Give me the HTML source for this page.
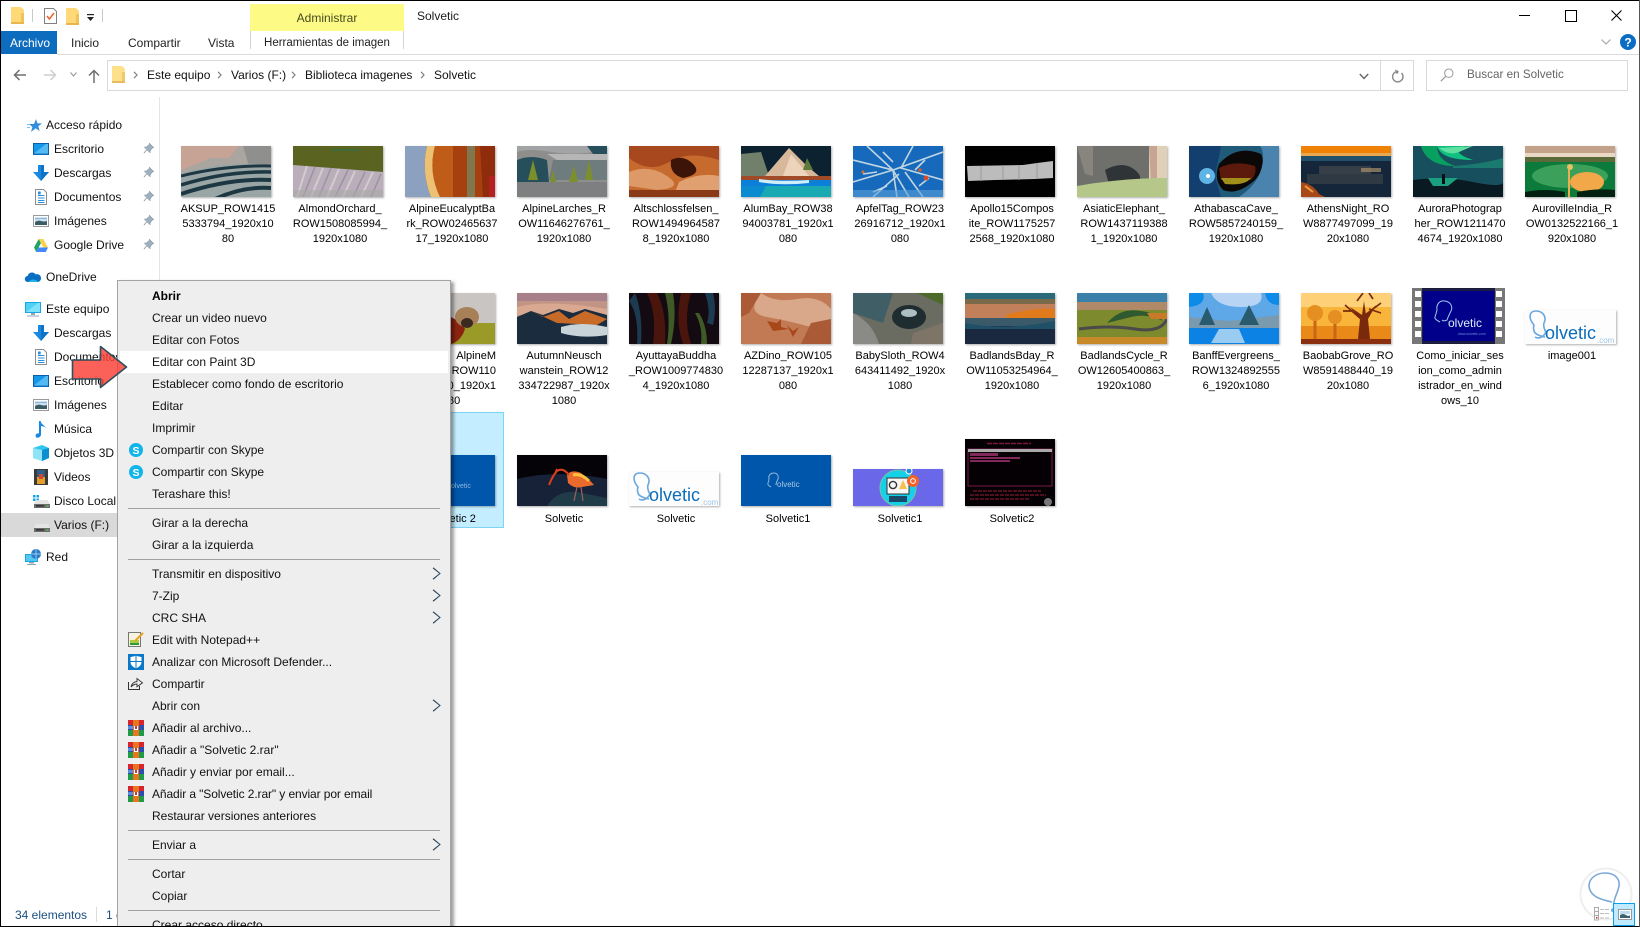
<!DOCTYPE html>
<html lang="es"><head><meta charset="utf-8"><title>Solvetic</title>
<style>
html,body{margin:0;padding:0;background:#fff}
#w{position:relative;width:1640px;height:927px;overflow:hidden;background:#fff;font-family:"Liberation Sans",sans-serif;color:#111}
.a{position:absolute}
.n{position:absolute;white-space:nowrap;font-size:12px;line-height:16px}
.l{position:absolute;width:112px;text-align:center;font-size:11px;line-height:15px;white-space:nowrap;color:#000}
.th{position:absolute;box-shadow:1px 1px 2px rgba(0,0,0,.32);display:block}
.ic{position:absolute;display:block;overflow:visible}
.m{position:absolute;left:152px;white-space:nowrap;font-size:12px;line-height:16px;color:#111}
.s{position:absolute;left:128px;width:312px;height:1px;background:#a0a0a0}
.c{position:absolute;left:432px;width:9px;height:13px}
</style></head><body><div id="w">

<!-- symbols -->
<svg width="0" height="0" style="position:absolute"><defs>
<symbol id="pin" viewBox="0 0 12 12"><path d="M7 0.5 L11.5 5 L9.8 5.6 L7.8 8.4 L7.6 10.4 L1.8 4.6 L3.8 4.3 L6.4 2.3Z M4 7.6 L1 11" fill="#9fb0bd" stroke="#93a5b3" stroke-width="1"/></symbol>
<symbol id="dl" viewBox="0 0 16 16"><path d="M5 0h6v7h5l-8 9-8-9h5z" fill="#1a87e0"/><path d="M8 0h3v7h5l-8 9z" fill="#0f74c8"/></symbol>
<symbol id="doc" viewBox="0 0 12 16"><path d="M.5.5h8l3 3v12H.5z" fill="#fff" stroke="#8d8d8d"/><path d="M3 4h3M3 6.5h6.5M3 9h6.5M3 11.5h6.5M3 13.5h6.5" stroke="#2e8fdc" stroke-width="1.1"/><path d="M3 2.5h2.5v3H3z" fill="#2e8fdc"/></symbol>
<symbol id="pic" viewBox="0 0 16 12"><rect x=".5" y=".5" width="15" height="11" fill="#fff" stroke="#9a9a9a"/><rect x="2" y="2" width="12" height="8" fill="#cfe3f2"/><path d="M2 7q3-2 6-1t6 0v4H2z" fill="#3c5b66"/><path d="M2 3h12v1.5q-6-1-12 0z" fill="#8fbcdc"/></symbol>
<symbol id="desk" viewBox="0 0 16 12"><rect width="16" height="12" fill="#0a5fa8"/><rect x="1" y="1" width="14" height="9.5" fill="#1496ea"/><path d="M1 10.5L13 1h2v9.5z" fill="#53baf2"/><rect x="1" y="10.5" width="14" height="1" fill="#0d7ccc"/></symbol>
<symbol id="hd" viewBox="0 0 16 8"><path d="M2 0h12l2 4v4H0V4z" fill="#e4e4e4"/><rect y="4" width="16" height="4" fill="#6d6d6d"/><rect x="2" y="5.3" width="8" height="1.2" fill="#222"/><rect x="12.5" y="5.3" width="2" height="1.4" fill="#3dd35a"/></symbol>
<symbol id="rar" viewBox="0 0 16 16"><rect width="16" height="5" fill="#2a55b8"/><rect y="5" width="16" height="5" fill="#2a4fb0"/><rect y="10" width="16" height="6" fill="#1f9a46"/><rect x="5" width="6" height="16" fill="#e8761e"/><rect width="5" height="5" fill="#d8242c"/><rect x="11" width="5" height="5" fill="#d8242c"/><rect x="6" y="6" width="4" height="4" fill="#fff"/><rect x="7.2" y="6" width="1.6" height="3" fill="#a11"/><rect x="0" y="6" width="5" height="3" fill="#5a8fe0"/></symbol>
<symbol id="arr" viewBox="0 0 9 13"><path d="M1 .8L8 6.5 1 12.2" fill="none" stroke="#333" stroke-width="1" /><path d="M2 .8L8.3 6.5 2 12.2" fill="none" stroke="#2c8fd8" stroke-width=".4"/></symbol>
</defs></svg>

<!-- title bar / quick access -->
<svg class="ic" style="left:11px;top:7px" width="14" height="17" viewBox="0 0 14 17"><path d="M0 0h10l3 3v14H0z" fill="#ffd978"/><path d="M10 6h3v11h-3z" fill="#f0c25a"/><path d="M0 15h13v2H0z" fill="#e8b64c"/></svg>
<div class="a" style="left:32px;top:9px;width:1px;height:13px;background:#c9c9c9"></div>
<svg class="ic" style="left:44px;top:8px" width="13" height="16" viewBox="0 0 13 16"><path d="M.5.5h9l3 3v12H.5z" fill="#fff" stroke="#808080"/><path d="M3 8l2.4 3L10 5" fill="none" stroke="#e8632a" stroke-width="1.5"/></svg>
<svg class="ic" style="left:66px;top:8px" width="14" height="17" viewBox="0 0 14 17"><path d="M0 0h10l3 3v14H0z" fill="#ffd978"/><path d="M10 6h3v11h-3z" fill="#f0c25a"/><path d="M0 15h13v2H0z" fill="#e8b64c"/></svg>
<svg class="ic" style="left:87px;top:14px" width="7" height="7" viewBox="0 0 7 7"><path d="M0 0h7v1.2H0z" fill="#222"/><path d="M0 3h7L3.500 7z" fill="#222"/></svg>
<div class="a" style="left:102px;top:9px;width:1px;height:13px;background:#c9c9c9"></div>
<div class="a" style="left:250px;top:4px;width:154px;height:27px;background:#fdfb85"></div>
<div class="n" style="left:250px;width:154px;text-align:center;top:10px;color:#444b20">Administrar</div>
<div class="n" style="left:417px;top:8px;color:#1a1a1a">Solvetic</div>
<div class="a" style="left:1519px;top:15px;width:11px;height:1px;background:#000"></div>
<div class="a" style="left:1565px;top:10px;width:10px;height:10px;border:1px solid #000"></div>
<svg class="ic" style="left:1611px;top:10px" width="11" height="11" viewBox="0 0 11 11"><path d="M.5.5l10 10M10.500.5l-10 10" stroke="#000" stroke-width="1.1"/></svg>
<svg class="ic" style="left:1601px;top:39px" width="10" height="6" viewBox="0 0 10 6"><path d="M.5.5L5 5 9.500.5" fill="none" stroke="#aaa" stroke-width="1.2"/></svg>
<svg class="ic" style="left:1620px;top:34px" width="16" height="16" viewBox="0 0 16 16"><circle cx="8" cy="8" r="8" fill="#0a6cc4"/><text x="8" y="12.5" text-anchor="middle" font-family="Liberation Sans" font-size="12" font-weight="bold" fill="#fff">?</text></svg>

<!-- ribbon tabs -->
<div class="a" style="left:1px;top:31px;width:56px;height:23px;background:#0e6cbe"></div>
<div class="n" style="left:10px;top:35px;color:#fff">Archivo</div>
<div class="n" style="left:71px;top:35px;color:#222">Inicio</div>
<div class="n" style="left:128px;top:35px;color:#222">Compartir</div>
<div class="n" style="left:208px;top:35px;color:#222">Vista</div>
<div class="a" style="left:250px;top:31px;width:1px;height:18px;background:#d4d4d4"></div>
<div class="a" style="left:403px;top:31px;width:1px;height:18px;background:#d4d4d4"></div>
<div class="n" style="left:251px;width:152px;text-align:center;top:35px;color:#222;font-size:11.5px">Herramientas de imagen</div>
<div class="a" style="left:57px;top:54px;width:1583px;height:1px;background:#dadbdc"></div>

<!-- nav -->
<svg class="ic" style="left:13px;top:69px" width="14" height="12" viewBox="0 0 14 12"><path d="M13 6H2M6.500 1L1.500 6l5 5" fill="none" stroke="#6e6e6e" stroke-width="1.5"/></svg>
<svg class="ic" style="left:43px;top:69px" width="14" height="12" viewBox="0 0 14 12"><path d="M1 6h11M7.500 1l5 5-5 5" fill="none" stroke="#cfcfcf" stroke-width="1.5"/></svg>
<svg class="ic" style="left:70px;top:72px" width="7" height="5" viewBox="0 0 7 5"><path d="M.5.5L3.500 4l3-3.500" fill="none" stroke="#9c9c9c" stroke-width="1.2"/></svg>
<svg class="ic" style="left:88px;top:69px" width="12" height="14" viewBox="0 0 12 14"><path d="M6 14V2M1 6.500l5-5 5 5" fill="none" stroke="#6e6e6e" stroke-width="1.5"/></svg>
<div class="a" style="left:107px;top:60px;width:1305px;height:29px;border:1px solid #d9d9d9"></div>
<div class="a" style="left:1380px;top:61px;width:1px;height:29px;background:#d9d9d9"></div>
<svg class="ic" style="left:112px;top:66px" width="14" height="17" viewBox="0 0 14 17"><path d="M0 0h10l3 3v14H0z" fill="#ffe08a"/><path d="M10 6h3v11h-3z" fill="#f0c870"/><path d="M0 15h13v2H0z" fill="#e8bc5c"/></svg>
<svg class="ic" style="left:133px;top:71px" width="5" height="8" viewBox="0 0 5 8"><path d="M1 .8L4 4 1 7.200" fill="none" stroke="#808080" stroke-width="1.2"/></svg>
<div class="n" style="left:147px;top:67px">Este equipo</div>
<svg class="ic" style="left:217px;top:71px" width="5" height="8" viewBox="0 0 5 8"><path d="M1 .8L4 4 1 7.200" fill="none" stroke="#808080" stroke-width="1.2"/></svg>
<div class="n" style="left:231px;top:67px">Varios (F:)</div>
<svg class="ic" style="left:291px;top:71px" width="5" height="8" viewBox="0 0 5 8"><path d="M1 .8L4 4 1 7.200" fill="none" stroke="#808080" stroke-width="1.2"/></svg>
<div class="n" style="left:305px;top:67px">Biblioteca imagenes</div>
<svg class="ic" style="left:420px;top:71px" width="5" height="8" viewBox="0 0 5 8"><path d="M1 .8L4 4 1 7.200" fill="none" stroke="#808080" stroke-width="1.2"/></svg>
<div class="n" style="left:434px;top:67px">Solvetic</div>
<svg class="ic" style="left:1359px;top:73px" width="10" height="7" viewBox="0 0 10 7"><path d="M.8 1L5 5.500 9.200 1" fill="none" stroke="#666" stroke-width="1.4"/></svg>
<svg class="ic" style="left:1391px;top:69px" width="13" height="14" viewBox="0 0 13 14"><path d="M6.500 1.500v3M10.500 4A5.200 5.200 0 1 1 4.500 3" fill="none" stroke="#8a8a8a" stroke-width="1.4"/><path d="M4 .5l4 2-3 2.500z" fill="#8a8a8a"/></svg>
<div class="a" style="left:1426px;top:60px;width:200px;height:29px;border:1px solid #d9d9d9"></div>
<svg class="ic" style="left:1440px;top:68px" width="14" height="14" viewBox="0 0 14 14"><circle cx="8.800" cy="5.200" r="4.200" fill="none" stroke="#9a9a9a"/><path d="M5.800 8.300L.8 13.200" stroke="#9a9a9a" stroke-width="1.2"/></svg>
<div class="n" style="left:1467px;top:67px;color:#666;font-size:11.7px">Buscar en Solvetic</div>

<!-- sidebar -->
<div class="a" style="left:159px;top:97px;width:1px;height:830px;background:#e5e5e5"></div>
<div class="a" style="left:1px;top:513px;width:118px;height:24px;background:#d9d9d9"></div>
<svg class="ic" style="left:27px;top:119px" width="15" height="13" viewBox="0 0 15 13"><path d="M9 0l1.400 4.400H15l-3.700 2.800L12.600 12 8.600 9.200 4 13l1.400-5L2 5h5z" fill="#2f8fdc"/><path d="M0 5.500h3M0 8.500h3" stroke="#7dbdec"/></svg>
<div class="n" style="left:46px;top:117px">Acceso rápido</div>
<svg class="ic" style="left:33px;top:143px" width="16" height="12"><use href="#desk"/></svg>
<div class="n" style="left:54px;top:141px">Escritorio</div>
<svg class="ic" style="left:33px;top:165px" width="16" height="16"><use href="#dl"/></svg>
<div class="n" style="left:54px;top:165px">Descargas</div>
<svg class="ic" style="left:35px;top:189px" width="12" height="16"><use href="#doc"/></svg>
<div class="n" style="left:54px;top:189px">Documentos</div>
<svg class="ic" style="left:33px;top:215px" width="16" height="12"><use href="#pic"/></svg>
<div class="n" style="left:54px;top:213px">Imágenes</div>
<svg class="ic" style="left:34px;top:239px" width="14" height="13" viewBox="0 0 14 13"><path d="M4.700 0L0 8.500 2.200 13 7 4z" fill="#1fa463"/><path d="M4.700 0h4.600L14 8.500H9.400z" fill="#ffd04b"/><path d="M2.200 13h9.600L14 8.500H4.600z" fill="#4387fd"/></svg>
<div class="n" style="left:54px;top:237px">Google Drive</div>
<svg class="ic" style="left:143px;top:143px" width="11" height="11"><use href="#pin"/></svg>
<svg class="ic" style="left:143px;top:167px" width="11" height="11"><use href="#pin"/></svg>
<svg class="ic" style="left:143px;top:191px" width="11" height="11"><use href="#pin"/></svg>
<svg class="ic" style="left:143px;top:215px" width="11" height="11"><use href="#pin"/></svg>
<svg class="ic" style="left:143px;top:239px" width="11" height="11"><use href="#pin"/></svg>
<svg class="ic" style="left:25px;top:271px" width="16" height="11" viewBox="0 0 16 11"><path d="M3 11A3 3 0 0 1 2.600 5 4.500 4.500 0 0 1 10.600 3.400 3.600 3.600 0 0 1 13.400 11z" fill="#0a6fc2"/><path d="M3 11q5-5 10.400 0z" fill="#22b0e8"/></svg>
<div class="n" style="left:46px;top:269px">OneDrive</div>
<svg class="ic" style="left:25px;top:302px" width="16" height="15" viewBox="0 0 16 15"><rect width="16" height="11" fill="#1ba5e4"/><path d="M1 1h14v9H1z" fill="#4fd0f5"/><path d="M1 10L13 1h2v9z" fill="#7de2fa"/><path d="M6 11h4v2H6zM2 13.500h12v1H2z" fill="#8fa6b4"/></svg>
<div class="n" style="left:46px;top:301px">Este equipo</div>
<svg class="ic" style="left:33px;top:325px" width="16" height="16"><use href="#dl"/></svg>
<div class="n" style="left:54px;top:325px">Descargas</div>
<svg class="ic" style="left:35px;top:349px" width="12" height="16"><use href="#doc"/></svg>
<div class="n" style="left:54px;top:349px">Documentos</div>
<svg class="ic" style="left:33px;top:375px" width="16" height="12"><use href="#desk"/></svg>
<div class="n" style="left:54px;top:373px">Escritorio</div>
<svg class="ic" style="left:33px;top:399px" width="16" height="12"><use href="#pic"/></svg>
<div class="n" style="left:54px;top:397px">Imágenes</div>
<svg class="ic" style="left:35px;top:421px" width="12" height="17" viewBox="0 0 12 17"><path d="M4 0h1.600c.4 3 3.500 4 5.400 7-1.300-1-3-1.800-5-2v8.500C6 16 3.500 17 1.800 16.600 0 16 .2 13.500 2 12.600c.7-.4 1.400-.4 2-.2z" fill="#1a87e0"/></svg>
<div class="n" style="left:54px;top:421px">Música</div>
<svg class="ic" style="left:33px;top:445px" width="16" height="16" viewBox="0 0 16 16"><path d="M0 3l9-3 7 3v10l-7 3-9-3z" fill="#2fc5ee"/><path d="M0 3l9 2v11l-9-3z" fill="#8fe4f8"/><path d="M9 5l7-2v10l-7 3z" fill="#0c8fd0"/></svg>
<div class="n" style="left:54px;top:445px">Objetos 3D</div>
<svg class="ic" style="left:34px;top:469px" width="14" height="16" viewBox="0 0 14 16"><rect width="14" height="16" fill="#3a3a3a"/><rect x="3" y="1" width="8" height="14" fill="#2c5f8a"/><rect x="3" y="8" width="8" height="7" fill="#e2a02a"/><rect x="5" y="5" width="4" height="5" fill="#d5472a"/></svg>
<div class="n" style="left:54px;top:469px">Videos</div>
<svg class="ic" style="left:33px;top:495px" width="6" height="6" viewBox="0 0 6 6"><path d="M0 0h2.500v2.500H0zM3.500 0H6v2.500H3.500zM0 3.500h2.500V6H0zM3.500 3.500H6V6H3.500z" fill="#11a5ea"/></svg>
<svg class="ic" style="left:34px;top:500px" width="16" height="8"><use href="#hd"/></svg>
<div class="n" style="left:54px;top:493px">Disco Local</div>
<svg class="ic" style="left:34px;top:524px" width="16" height="8"><use href="#hd"/></svg>
<div class="n" style="left:54px;top:517px">Varios (F:)</div>
<svg class="ic" style="left:25px;top:549px" width="16" height="16" viewBox="0 0 16 16"><rect y="5" width="13" height="8" fill="#1ba5e4"/><rect x="1" y="6" width="11" height="6" fill="#53c8f2"/><circle cx="11" cy="5" r="5" fill="#2a7cc8"/><path d="M11 0v10M6 5h10" stroke="#bfe3f7" stroke-width=".7"/><path d="M4 13h5v1.500H4zM2 15h9v1H2z" fill="#8fa6b4"/></svg>
<div class="n" style="left:46px;top:549px">Red</div>

<!-- ROW 1 thumbs -->
<svg class="th" style="left:181px;top:146px" width="90" height="51" viewBox="0 0 90 51"><rect width="90" height="51" fill="#aaa59f"/><path d="M0 0h58L48 12 30 12 0 24z" fill="#c7a396"/><path d="M62 0h28v18L68 20z" fill="#8f8f8e"/><path d="M0 28q45-14 90-9v32H0z" fill="#9aa6a5"/><g fill="none" stroke="#1d3843"><path d="M0 30q45-11 90-10" stroke-width="3"/><path d="M0 39q45-14 90-13" stroke-width="3.500"/><path d="M0 48q48-16 90-14" stroke-width="4"/><path d="M30 55q30-15 60-13" stroke-width="4"/></g></svg>
<svg class="th" style="left:293px;top:146px" width="90" height="51" viewBox="0 0 90 51"><rect width="90" height="51" fill="#bbaebb"/><path d="M0 0h90v26L0 19z" fill="#5a631f"/><path d="M38 4h30" stroke="#3f6b3a" stroke-width="2"/><g stroke="#d8d4d6" stroke-width="2" opacity=".8"><path d="M14 20L4 51M30 22L18 51M46 23L34 51M62 25L50 51M80 26L68 51"/></g><g stroke="#978a9c" stroke-width="1.500" opacity=".8"><path d="M22 21L10 51M38 22L26 51M55 24L42 51M72 26L60 51M88 28L78 51"/></g><path d="M0 44h90v7H0z" fill="#a8a8a6" opacity=".6"/></svg>
<svg class="th" style="left:405px;top:146px" width="90" height="51" viewBox="0 0 90 51"><rect width="90" height="51" fill="#a7400f"/><path d="M0 0h22q-6 26 4 51H0z" fill="#8ba1bf"/><path d="M22 0h8q-7 26 5 51H26Q16 26 22 0z" fill="#ecc174"/><path d="M30 0h18v51H35Q23 26 30 0z" fill="#bf5c18"/><path d="M62 0h8v51h-8z" fill="#6f8f6a" opacity=".7"/><path d="M75 0h15v51H78z" fill="#8e2c0c"/><path d="M84 30h6v21h-6z" fill="#b52020"/></svg>
<svg class="th" style="left:517px;top:146px" width="90" height="51" viewBox="0 0 90 51"><rect width="90" height="51" fill="#8e8f8d"/><path d="M0 0h90v4q-30 6-55 2T0 6z" fill="#a2a3a4"/><path d="M0 14q14-6 30 0l2 22H0zM70 0h20v12L76 8z" fill="#264f5b"/><path d="M30 8h60v6H40z" fill="#b6b6b6"/><path d="M36 14h54v20H32z" fill="#6f7c7e"/><path d="M16 14l5 20H11zM57 20l4 16H52zM72 14l4 20H68z" fill="#7c8f2b"/><path d="M36 24l3 12h-6z" fill="#7c8f2b"/><path d="M0 36h90v15H0z" fill="#7d7f80"/></svg>
<svg class="th" style="left:629px;top:146px" width="90" height="51" viewBox="0 0 90 51"><rect width="90" height="51" fill="#c66a2e"/><path d="M0 0h90v14Q60 4 40 16T0 12z" fill="#a8481e"/><path d="M42 14q12-6 22 4t-10 14q-14-4-12-18z" fill="#3d1508"/><path d="M0 26q20-8 38 4t-10 14L0 40z" fill="#dd9a68"/><path d="M50 36q20-10 40-6v21H44z" fill="#e0a070"/><path d="M0 44h90v7H0z" fill="#8a3a16"/></svg>
<svg class="th" style="left:741px;top:146px" width="90" height="51" viewBox="0 0 90 51"><rect width="90" height="51" fill="#0d2230"/><path d="M0 8L20 6 28 30H0z" fill="#70806a"/><path d="M24 30L48 2 66 20 78 30z" fill="#d8b89a"/><path d="M50 8L68 30H42z" fill="#ecd3ba"/><path d="M66 12L72 24H62z" fill="#5e7a3a"/><path d="M0 30h90v4H0z" fill="#a04a28"/><path d="M0 34h90v6H0z" fill="#0c7fd8"/><path d="M18 33q22 3 50 1v3q-28 3-50-1z" fill="#cfeefc"/><path d="M0 40h90v11H0z" fill="#18a9b2"/><path d="M0 40h25l-6 11H0z" fill="#0a8bd0"/></svg>
<svg class="th" style="left:853px;top:146px" width="90" height="51" viewBox="0 0 90 51"><rect width="90" height="51" fill="#1769bb"/><g fill="none" stroke="#bfd6e2" stroke-width="1.600"><path d="M0 14L40 24 90 6M0 36L40 24 56 51M14 0L40 24 44 51M60 0L48 22 90 34M20 51L46 28M70 51L52 26"/><path d="M30 6l10 10M72 14l-10 10M10 28l14-2M66 40l10-8M34 40l-14 6"/></g><circle cx="67" cy="24" r="1.800" fill="#d8582c"/><circle cx="73" cy="32" r="2.400" fill="#d84a2a"/><circle cx="10" cy="26" r="1.500" fill="#d8702a"/><path d="M0 44h90v7H0z" fill="#5aa0d8" opacity=".6"/></svg>
<svg class="th" style="left:965px;top:146px" width="90" height="51" viewBox="0 0 90 51"><rect width="90" height="51" fill="#020101"/><path d="M2 20L58 19 72 17 88 15V32L70 33 30 34 3 35z" fill="#bcbcbc"/><path d="M16 20v15M38 19v15M54 19v15M72 17v16" stroke="#9a9a9a"/></svg>
<svg class="th" style="left:1077px;top:146px" width="90" height="51" viewBox="0 0 90 51"><rect width="90" height="51" fill="#e0d0b8"/><path d="M0 0h72v44H0z" fill="#6f706c"/><path d="M72 0h8v38h-6z" fill="#c7a592"/><path d="M28 24q18-10 30 0t-4 14H32z" fill="#2f3436"/><path d="M0 0h16v30L8 28z" fill="#88847e"/><path d="M0 40q45-8 90-8v19H0z" fill="#b5c889"/></svg>
<svg class="th" style="left:1189px;top:146px" width="90" height="51" viewBox="0 0 90 51"><rect width="90" height="51" fill="#1f5a78"/><path d="M0 0h32L26 30 32 51H0z" fill="#133f6e"/><circle cx="18" cy="30" r="8" fill="#5fb4e6"/><circle cx="19" cy="30" r="2" fill="#fff"/><path d="M30 18Q48-2 72 8q6 12-6 26Q48 50 34 44q-10-10-4-26z" fill="#0c0807"/><path d="M30 22q16-8 36-2 2 8-4 14H32z" fill="#5c1a0c"/><path d="M32 32h30q-6 8-26 6z" fill="#a0901a"/><path d="M40 0q30 0 50 0v51H50q24-16 24-40T40 0z" fill="#4a84ae"/></svg>
<svg class="th" style="left:1301px;top:146px" width="90" height="51" viewBox="0 0 90 51"><rect width="90" height="51" fill="#16263a"/><rect width="90" height="7" fill="#ef8106"/><rect y="7" width="90" height="3" fill="#e8a850"/><rect y="10" width="90" height="5" fill="#22506a"/><g fill="#5e5f58"><rect x="18" y="20" width="52" height="8" opacity=".45"/><rect x="6" y="28" width="76" height="10" opacity=".35"/><rect x="60" y="22" width="20" height="4" fill="#a89068" opacity=".7"/></g><path d="M0 36q12 2 18 12l6 3H0z" fill="#a84818"/><path d="M4 40l8 6" stroke="#e8a040" stroke-width="2"/></svg>
<svg class="th" style="left:1413px;top:146px" width="90" height="51" viewBox="0 0 90 51"><rect width="90" height="51" fill="#184f5e"/><path d="M8 0q6 20 34 20Q24 14 24 0z" fill="#08a060"/><path d="M24 0h28Q36 6 60 14 28 14 24 0z" fill="#10c080"/><path d="M26 2q10 8 20 4L60 0z" fill="#60e0a0"/><path d="M40 20q30-2 50-8v10H40z" fill="#1a7a70"/><path d="M0 34q30-4 60 2t30 0v15H0z" fill="#0a1a22"/><path d="M15 32h30l-10 8H20z" fill="#1aa080"/><rect x="29" y="28" width="3" height="10" fill="#0a0f14"/></svg>
<svg class="th" style="left:1525px;top:146px" width="90" height="51" viewBox="0 0 90 51"><rect width="90" height="51" fill="#0b7a3a"/><rect width="90" height="10" fill="#c4a28a"/><rect y="7" width="90" height="4" fill="#e8d8c4"/><rect y="11" width="90" height="5" fill="#5c6a3a"/><ellipse cx="45" cy="30" rx="38" ry="12" fill="#3aa05a"/><ellipse cx="62" cy="36" rx="17" ry="10" fill="#f0a848"/><path d="M44 20v31" stroke="#e8b050" stroke-width="2"/><circle cx="45" cy="21" r="3" fill="#e8c060"/><path d="M0 46q20-4 40 0v5H0zM52 46q20-4 38-2v7H52z" fill="#032010"/></svg>

<!-- ROW 1 labels -->
<div class="l" style="left:172px;top:202px">AKSUP_ROW1415<br>5333794_1920x10<br>80</div>
<div class="l" style="left:284px;top:202px">AlmondOrchard_<br>ROW1508085994_<br>1920x1080</div>
<div class="l" style="left:396px;top:202px">AlpineEucalyptBa<br>rk_ROW02465637<br>17_1920x1080</div>
<div class="l" style="left:508px;top:202px">AlpineLarches_R<br>OW11646276761_<br>1920x1080</div>
<div class="l" style="left:620px;top:202px">Altschlossfelsen_<br>ROW1494964587<br>8_1920x1080</div>
<div class="l" style="left:732px;top:202px">AlumBay_ROW38<br>94003781_1920x1<br>080</div>
<div class="l" style="left:844px;top:202px">ApfelTag_ROW23<br>26916712_1920x1<br>080</div>
<div class="l" style="left:956px;top:202px">Apollo15Compos<br>ite_ROW1175257<br>2568_1920x1080</div>
<div class="l" style="left:1068px;top:202px">AsiaticElephant_<br>ROW1437119388<br>1_1920x1080</div>
<div class="l" style="left:1180px;top:202px">AthabascaCave_<br>ROW5857240159_<br>1920x1080</div>
<div class="l" style="left:1292px;top:202px">AthensNight_RO<br>W8877497099_19<br>20x1080</div>
<div class="l" style="left:1404px;top:202px">AuroraPhotograp<br>her_ROW1211470<br>4674_1920x1080</div>
<div class="l" style="left:1516px;top:202px">AurovilleIndia_R<br>OW0132522166_1<br>920x1080</div>

<!-- ROW 2 thumbs -->
<svg class="th" style="left:405px;top:293px" width="90" height="51" viewBox="0 0 90 51"><rect width="90" height="51" fill="#c9c5c2"/><path d="M46 30h44v21H46z" fill="#9a9a28"/><path d="M40 22q14 4 20 14-4 12-14 15H40z" fill="#8a2410"/><ellipse cx="62" cy="24" rx="12" ry="10" fill="#a88058"/><ellipse cx="62" cy="30" rx="6" ry="5" fill="#3a2a20"/></svg>
<svg class="th" style="left:517px;top:293px" width="90" height="51" viewBox="0 0 90 51"><rect width="90" height="51" fill="#c29486"/><rect width="90" height="8" fill="#a8808a"/><path d="M0 14q30-8 90 2v6H0z" fill="#d8a890"/><path d="M0 51V24L14 18l12 4 16-6 14 4 12-4 22 6v29z" fill="#1a2c3e"/><path d="M14 18l12 6 16-6 10 8 16-8 22 8-10 6-40-2z" fill="#c86a28"/><path d="M44 34q20-6 46 0v8q-26 4-46-2z" fill="#c8d4d8"/></svg>
<svg class="th" style="left:629px;top:293px" width="90" height="51" viewBox="0 0 90 51"><rect width="90" height="51" fill="#130a12"/><path d="M18 0q10 20 6 51h12Q38 20 28 0zM52 0q-6 28 2 51h8Q54 26 62 0z" fill="#4a150d"/><path d="M36 0q6 24 2 51h4Q48 24 44 0zM66 20q8 14 6 31h6q0-18-8-31z" fill="#3f5a26"/><path d="M0 8q10 14 8 43h4Q14 20 6 0z" fill="#1c3a50"/><path d="M76 0q6 18 2 30l6 2Q88 16 84 0z" fill="#1c3a50"/></svg>
<svg class="th" style="left:741px;top:293px" width="90" height="51" viewBox="0 0 90 51"><rect width="90" height="51" fill="#c27a55"/><path d="M20 0q14 10 36 6t34 10v16q-14 4-28 0T26 24 20 0z" fill="#d9a88a"/><path d="M26 28l10 2 4-4 0 8 8 2-16 2zM46 32l6 6 6-4-6 10z" fill="#a84818"/><path d="M0 0h20L8 20 0 24zM70 30l20-4v25H60z" fill="#ab5a36"/></svg>
<svg class="th" style="left:853px;top:293px" width="90" height="51" viewBox="0 0 90 51"><rect width="90" height="51" fill="#6a6c62"/><path d="M0 0h40L30 30 0 20z" fill="#3f5e66"/><path d="M0 20q20 10 26 31H0z" fill="#8a8a86"/><ellipse cx="56" cy="24" rx="17" ry="12" fill="#1f2c30"/><ellipse cx="56" cy="20" rx="8" ry="4" fill="#aebfc4"/><path d="M60 40l30-10v21H58z" fill="#7e7468"/><path d="M64 0h26v12z" fill="#4e6a2a"/></svg>
<svg class="th" style="left:965px;top:293px" width="90" height="51" viewBox="0 0 90 51"><rect width="90" height="51" fill="#1a2840"/><rect width="90" height="6" fill="#2a6a7a"/><rect y="6" width="90" height="5" fill="#7a6a4a"/><rect y="11" width="90" height="14" fill="#c2805a"/><path d="M40 22q30-8 50-6v10H44z" fill="#e07a1a"/><path d="M0 25h90v8H0z" fill="#3a5a6a"/><path d="M0 30q40 8 90-2v8H0z" fill="#205068"/></svg>
<svg class="th" style="left:1077px;top:293px" width="90" height="51" viewBox="0 0 90 51"><rect width="90" height="51" fill="#7e8a2e"/><rect width="90" height="9" fill="#3a80a8"/><path d="M0 9h90v8H0z" fill="#b08a68"/><path d="M30 30q14-16 34-12 16 2 22 10Q70 20 54 24T30 30z" fill="#2f5a30"/><path d="M2 36q30-4 56 0t32-10" fill="none" stroke="#4a4a4a" stroke-width="3"/><path d="M0 44h90v7H0z" fill="#c88a28"/><path d="M70 20h20v6H74z" fill="#c87a28"/></svg>
<svg class="th" style="left:1189px;top:293px" width="90" height="51" viewBox="0 0 90 51"><rect width="90" height="51" fill="#5ea8e8"/><path d="M0 0h14q4 12-14 14zM76 0h14v12q-12 0-14-12z" fill="#0c8ce8"/><path d="M22 0h50q4 14-20 14T22 0z" fill="#b7d4f5"/><path d="M0 24l40 4 50-6v14H0z" fill="#7a9ab0"/><path d="M18 14l8 18H10zM60 12l10 20H50z" fill="#2a5a6e"/><rect y="35" width="90" height="16" fill="#0b82e4"/><path d="M30 36h20l6 14H22z" fill="#9accf2"/></svg>
<svg class="th" style="left:1301px;top:293px" width="90" height="51" viewBox="0 0 90 51"><rect width="90" height="51" fill="#f8b53a"/><rect width="90" height="14" fill="#fed178"/><rect y="33" width="90" height="18" fill="#e98a18"/><rect y="46" width="90" height="5" fill="#8a3010"/><path d="M57 46l2-20-10-12 12 8 2-14 2 14 10-10-8 14 2 20z" fill="#7a2a0c"/><path d="M60 26L44 12M64 22L80 10M52 18l-10 0M68 16l12 4M56 8l6-8M72 6l-4-6" stroke="#7a2a0c" stroke-width="1.700"/><path d="M14 46V22M34 46V26" stroke="#c8661a" stroke-width="3"/><circle cx="14" cy="20" r="8" fill="#e58f22"/><circle cx="34" cy="24" r="7" fill="#e58f22"/></svg>
<svg class="a" style="left:1412px;top:288px" width="93" height="56" viewBox="0 0 93 56"><rect width="93" height="56" fill="#777"/><rect x="10" width="73" height="56" fill="#1c1c40"/><rect x="11" y="3" width="71" height="50" fill="#00008b"/><g fill="#fff"><rect x="3" y="3" width="6" height="6"/><rect x="3" y="13" width="6" height="6"/><rect x="3" y="23" width="6" height="6"/><rect x="3" y="33" width="6" height="6"/><rect x="3" y="43" width="6" height="6"/><rect x="84" y="3" width="6" height="6"/><rect x="84" y="13" width="6" height="6"/><rect x="84" y="23" width="6" height="6"/><rect x="84" y="33" width="6" height="6"/><rect x="84" y="43" width="6" height="6"/></g><path d="M28 34q-6-3-5-5 1-3 2-7c-1-6 3-10 8-9 6 1 8 6 6 10-2 4-3 6-4 9-2 1-4 1-5 0" fill="none" stroke="#a0c8ec" stroke-width="1"/><text x="36" y="39" font-family="Liberation Sans" font-size="12" fill="#d8ecfa">olvetic</text><text x="46" y="47" font-family="Liberation Sans" font-size="3.5" fill="#6a8ad8">www.solvetic.com</text></svg>
<svg class="th" style="left:1525px;top:310px" width="91" height="34" viewBox="0 0 91 34"><rect width="91" height="34" fill="#fdfdfd"/><path d="M20 27q-10-2-11-6-1-3 0-6C3 8 4 1 11 1s11 6 8 12c-1 3 1 8 2 9-3 6-8 7-11 5" fill="none" stroke="#6ca8de" stroke-width="1.600"/><text x="20" y="29" font-family="Liberation Sans" font-size="18" fill="#0a6dbd">olvetic</text><text x="72" y="33" font-family="Liberation Sans" font-size="8" fill="#9cc4e8">.com</text></svg>
<div class="l" style="left:1404px;top:349px">Como_iniciar_ses<br>ion_como_admin<br>istrador_en_wind<br>ows_10</div>
<div class="l" style="left:1516px;top:349px">image001</div>

<!-- row 2 labels -->
<div class="a" style="left:396px;top:349px;width:100px;text-align:right;font-size:11px;line-height:15px;white-space:nowrap;color:#000">AlpineM<br>ROW110<br>0_1920x1</div>
<div class="a" style="left:448px;top:394px;font-size:11px;line-height:15px;color:#000">80</div>
<div class="l" style="left:508px;top:349px">AutumnNeusch<br>wanstein_ROW12<br>334722987_1920x<br>1080</div>
<div class="l" style="left:620px;top:349px">AyuttayaBuddha<br>_ROW1009774830<br>4_1920x1080</div>
<div class="l" style="left:732px;top:349px">AZDino_ROW105<br>12287137_1920x1<br>080</div>
<div class="l" style="left:844px;top:349px">BabySloth_ROW4<br>643411492_1920x<br>1080</div>
<div class="l" style="left:956px;top:349px">BadlandsBday_R<br>OW11053254964_<br>1920x1080</div>
<div class="l" style="left:1068px;top:349px">BadlandsCycle_R<br>OW12605400863_<br>1920x1080</div>
<div class="l" style="left:1180px;top:349px">BanffEvergreens_<br>ROW1324892555<br>6_1920x1080</div>
<div class="l" style="left:1292px;top:349px">BaobabGrove_RO<br>W8591488440_19<br>20x1080</div>

<!-- ROW 3 -->
<div class="a" style="left:396px;top:412px;width:108px;height:116px;background:#c4eeff;border:1px solid #7ed4f7;box-sizing:border-box"></div>
<svg class="th" style="left:405px;top:455px" width="90" height="51" viewBox="0 0 90 51"><rect width="90" height="51" fill="#0056aa"/><text x="46" y="33" font-family="Liberation Sans" font-size="7" fill="#8fb8dc">olvetic</text></svg>
<div class="l" style="left:396px;top:512px;">Solvetic 2</div>
<svg class="th" style="left:517px;top:455px" width="90" height="51" viewBox="0 0 90 51"><rect width="90" height="51" fill="#050308"/><path d="M0 24q40-10 90 0v27H0z" fill="#172238"/><path d="M30 51q10-16 30-14l30 6v8z" fill="#1f3c48"/><path d="M50 20q4-6 14-2 8 6 13 12l-12 2q-8 2-14-4z" fill="#e86a2c"/><path d="M52 20q-6-8-12-4-4 4-8 14M40 14q-2 6-2 4" fill="none" stroke="#d8401c" stroke-width="2"/><path d="M60 32l-3 14M64 32l2 14" stroke="#a06060" stroke-width="1.200"/><path d="M56 20q8-2 16 6" fill="none" stroke="#ffc040" stroke-width="3"/></svg>
<div class="l" style="left:508px;top:512px">Solvetic</div>
<svg class="th" style="left:629px;top:472px" width="90" height="34" viewBox="0 0 90 34"><rect width="90" height="34" fill="#fdfdfd"/><path d="M20 27q-10-2-11-6-1-3 0-6C3 8 4 1 11 1s11 6 8 12c-1 3 1 8 2 9-3 6-8 7-11 5" fill="none" stroke="#6ca8de" stroke-width="1.600"/><text x="20" y="29" font-family="Liberation Sans" font-size="18" fill="#0a6dbd">olvetic</text><text x="72" y="33" font-family="Liberation Sans" font-size="8" fill="#9cc4e8">.com</text></svg>
<div class="l" style="left:620px;top:512px">Solvetic</div>
<svg class="th" style="left:741px;top:455px" width="90" height="51" viewBox="0 0 90 51"><rect width="90" height="51" fill="#0056aa"/><path d="M30 32q-4-2-3-4 1-2 1-4c-1-4 2-6 5-6s5 3 4 6c-1 2-2 4-2 6" fill="none" stroke="#8fb8dc"/><text x="36" y="32" font-family="Liberation Sans" font-size="8" fill="#a9c8e4">olvetic</text></svg>
<div class="l" style="left:732px;top:512px">Solvetic1</div>
<svg class="th" style="left:853px;top:469px" width="90" height="37" viewBox="0 0 90 37"><rect width="90" height="37" fill="#6a68e8"/><circle cx="45" cy="19" r="18" fill="#14d0e8" stroke="#7ac4a0"/><rect x="34" y="9" width="22" height="16" fill="#f6f6f6" stroke="#333"/><circle cx="40" cy="16" r="3.600" fill="none" stroke="#333" stroke-width="1.400"/><path d="M50 11l4 9h-8z" fill="#f4c04e"/><rect x="36" y="27" width="18" height="6" fill="#1a4a6a"/><circle cx="60" cy="12" r="6" fill="#f0642a"/><circle cx="60" cy="12" r="2.400" fill="none" stroke="#fff"/><circle cx="56" cy="2" r="3" fill="#1a8ae8" stroke="#fff"/></svg>
<div class="l" style="left:844px;top:512px">Solvetic1</div>
<svg class="th" style="left:965px;top:439px" width="90" height="67" viewBox="0 0 90 67"><rect width="90" height="67" fill="#050004"/><path d="M22 4.500h44" stroke="#7a1a3a" stroke-width="1.400" stroke-dasharray="5 1"/><rect x="3" y="10" width="84" height="37" fill="none" stroke="#7a1a4a" stroke-width="1"/><rect x="3" y="10" width="84" height="3" fill="#aaa"/><rect x="5" y="14" width="28" height="3" fill="#80285a"/><rect x="5" y="18" width="50" height="2" fill="#80285a"/><rect x="5" y="21" width="40" height="2" fill="#80285a"/><path d="M8 52h68M5 56h76M5 60h60" stroke="#6a1424" stroke-width="1.400" stroke-dasharray="4 1"/><circle cx="83" cy="63" r="4" fill="#777"/></svg>
<div class="l" style="left:956px;top:512px">Solvetic2</div>

<!-- status bar -->
<div class="n" style="left:15px;top:907px;color:#1c4f80">34 elementos</div>
<div class="a" style="left:96px;top:907px;width:1px;height:15px;background:#dcdcdc"></div>
<div class="n" style="left:106px;top:907px;color:#1c4f80">1 e</div>

<!-- context menu -->
<div class="a" style="left:117px;top:280px;width:334px;height:660px;box-sizing:border-box;background:#eee;border:1px solid #a3a3a3;box-shadow:3px 2px 3px rgba(0,0,0,.38)"></div>
<div class="a" style="left:120px;top:351px;width:328px;height:22px;background:#fff"></div>
<div class="m" style="top:288px;font-weight:bold;color:#000">Abrir</div>
<div class="m" style="top:310px">Crear un video nuevo</div>
<div class="m" style="top:332px">Editar con Fotos</div>
<div class="m" style="top:354px">Editar con Paint 3D</div>
<div class="m" style="top:376px">Establecer como fondo de escritorio</div>
<div class="m" style="top:398px">Editar</div>
<div class="m" style="top:420px">Imprimir</div>
<div class="m" style="top:442px">Compartir con Skype</div>
<div class="m" style="top:464px">Compartir con Skype</div>
<div class="m" style="top:486px">Terashare this!</div>
<div class="s" style="top:508px"></div>
<div class="m" style="top:515px">Girar a la derecha</div>
<div class="m" style="top:537px">Girar a la izquierda</div>
<div class="s" style="top:559px"></div>
<div class="m" style="top:566px">Transmitir en dispositivo</div>
<div class="m" style="top:588px">7-Zip</div>
<div class="m" style="top:610px">CRC SHA</div>
<div class="m" style="top:632px">Edit with Notepad++</div>
<div class="m" style="top:654px">Analizar con Microsoft Defender...</div>
<div class="m" style="top:676px">Compartir</div>
<div class="m" style="top:698px">Abrir con</div>
<div class="m" style="top:720px">Añadir al archivo...</div>
<div class="m" style="top:742px">Añadir a "Solvetic 2.rar"</div>
<div class="m" style="top:764px">Añadir y enviar por email...</div>
<div class="m" style="top:786px;letter-spacing:-.1px">Añadir a "Solvetic 2.rar" y enviar por email</div>
<div class="m" style="top:808px">Restaurar versiones anteriores</div>
<div class="s" style="top:830px"></div>
<div class="m" style="top:837px">Enviar a</div>
<div class="s" style="top:859px"></div>
<div class="m" style="top:866px">Cortar</div>
<div class="m" style="top:888px">Copiar</div>
<div class="s" style="top:910px"></div>
<div class="m" style="top:917px">Crear acceso directo</div>
<svg class="c" style="top:567px"><use href="#arr"/></svg>
<svg class="c" style="top:589px"><use href="#arr"/></svg>
<svg class="c" style="top:611px"><use href="#arr"/></svg>
<svg class="c" style="top:699px"><use href="#arr"/></svg>
<svg class="c" style="top:838px"><use href="#arr"/></svg>
<svg class="ic" style="left:129px;top:443px" width="14" height="14" viewBox="0 0 14 14"><circle cx="7" cy="7" r="7" fill="#11b5ea"/><text x="7" y="11" text-anchor="middle" font-family="Liberation Sans" font-size="10.5" font-weight="bold" fill="#fff">S</text></svg>
<svg class="ic" style="left:129px;top:465px" width="14" height="14" viewBox="0 0 14 14"><circle cx="7" cy="7" r="7" fill="#11b5ea"/><text x="7" y="11" text-anchor="middle" font-family="Liberation Sans" font-size="10.5" font-weight="bold" fill="#fff">S</text></svg>
<svg class="ic" style="left:128px;top:632px" width="16" height="15" viewBox="0 0 16 15"><rect x=".5" y=".5" width="12" height="14" fill="#f4f4e0" stroke="#777"/><rect x="2" y="8" width="9" height="3" fill="#a8d040"/><rect x="2" y="11" width="9" height="2" fill="#2a9a3a"/><path d="M7 9L15 1" stroke="#e8a020" stroke-width="2"/></svg>
<svg class="ic" style="left:128px;top:654px" width="16" height="16" viewBox="0 0 16 16"><rect width="16" height="16" fill="#0a78c8"/><path d="M8 1.500q3 1.500 5.500 1.500v5q0 4-5.500 6.500Q2.500 12 2.500 8V3Q5 3 8 1.500z" fill="#fff"/><path d="M8 1.500v13M2.500 7.500h11" stroke="#0a78c8" stroke-width="1"/></svg>
<svg class="ic" style="left:128px;top:677px" width="15" height="13" viewBox="0 0 15 13"><path d="M.5 5v7.500h11V9" fill="none" stroke="#333"/><path d="M3 10q1-5 6-5.500V1.500l5.500 4.300L9 9.800V7Q5.500 7 3 10z" fill="#eee" stroke="#333" stroke-width=".9"/></svg>
<svg class="ic" style="left:128px;top:720px" width="16" height="16"><use href="#rar"/></svg>
<svg class="ic" style="left:128px;top:742px" width="16" height="16"><use href="#rar"/></svg>
<svg class="ic" style="left:128px;top:764px" width="16" height="16"><use href="#rar"/></svg>
<svg class="ic" style="left:128px;top:786px" width="16" height="16"><use href="#rar"/></svg>

<!-- red arrow -->
<svg class="ic" style="left:70px;top:344px" width="60" height="46" viewBox="0 0 60 46"><path d="M2.500 16H30.500V2.500L56.500 23 30.500 43.500V35H2.500z" fill="#fb3e34" fill-opacity=".82" stroke="#2e4f5c" stroke-width="1.600" stroke-linejoin="round"/></svg>

<!-- watermark + view buttons -->
<svg class="ic" style="left:1578px;top:866px" width="58" height="58" viewBox="0 0 58 58"><circle cx="28" cy="28" r="25.500" fill="none" stroke="#efefef" stroke-width="2"/><path d="M34 36C26 34 12 32 11 20 11 11 20 7 27 7 38 7 42 14 41 20 40 26 37 30 36 36 36 42 42 41 44 39 40 43 32 42 34 45 38 47 44 47 46 44" fill="none" stroke="#7aa9d6" stroke-width="1.600"/></svg>
<svg class="ic" style="left:1594px;top:907px" width="18" height="14" viewBox="0 0 18 14"><rect x=".5" y=".5" width="4" height="4" fill="#fff" stroke="#aaa"/><rect x=".5" y="4.500" width="4" height="4" fill="#fff" stroke="#aaa"/><rect x=".5" y="8.500" width="4" height="4.500" fill="#fff" stroke="#aaa"/><rect x="2" y="10" width="1.500" height="1.500" fill="#c22"/><path d="M6 2.500h4M11 2.500h4M6 6.500h4M11 6.500h4M6 11h4M11 11h4" stroke="#bdbdbd"/></svg>
<div class="a" style="left:1613px;top:903px;width:22px;height:23px;box-sizing:border-box;background:#bfeaff;border:1px solid #0a9fe8"></div>
<svg class="ic" style="left:1618px;top:909px" width="14" height="11" viewBox="0 0 14 11"><rect x=".5" y=".5" width="13" height="10" fill="#fff" stroke="#9a9a9a"/><path d="M2 2h10v3H2z" fill="#bcdcf0"/><path d="M2 6q3-2 6 0t4 0v3H2z" fill="#3a6270"/></svg>

<!-- window frame -->
<div class="a" style="left:0;top:0;width:1640px;height:1px;background:#000"></div>
<div class="a" style="left:0;top:0;width:1px;height:927px;background:#000"></div>
<div class="a" style="left:0;top:926px;width:1640px;height:1px;background:#000"></div>
<div class="a" style="left:1639px;top:0;width:1px;height:927px;background:#555"></div>
</div></body></html>
